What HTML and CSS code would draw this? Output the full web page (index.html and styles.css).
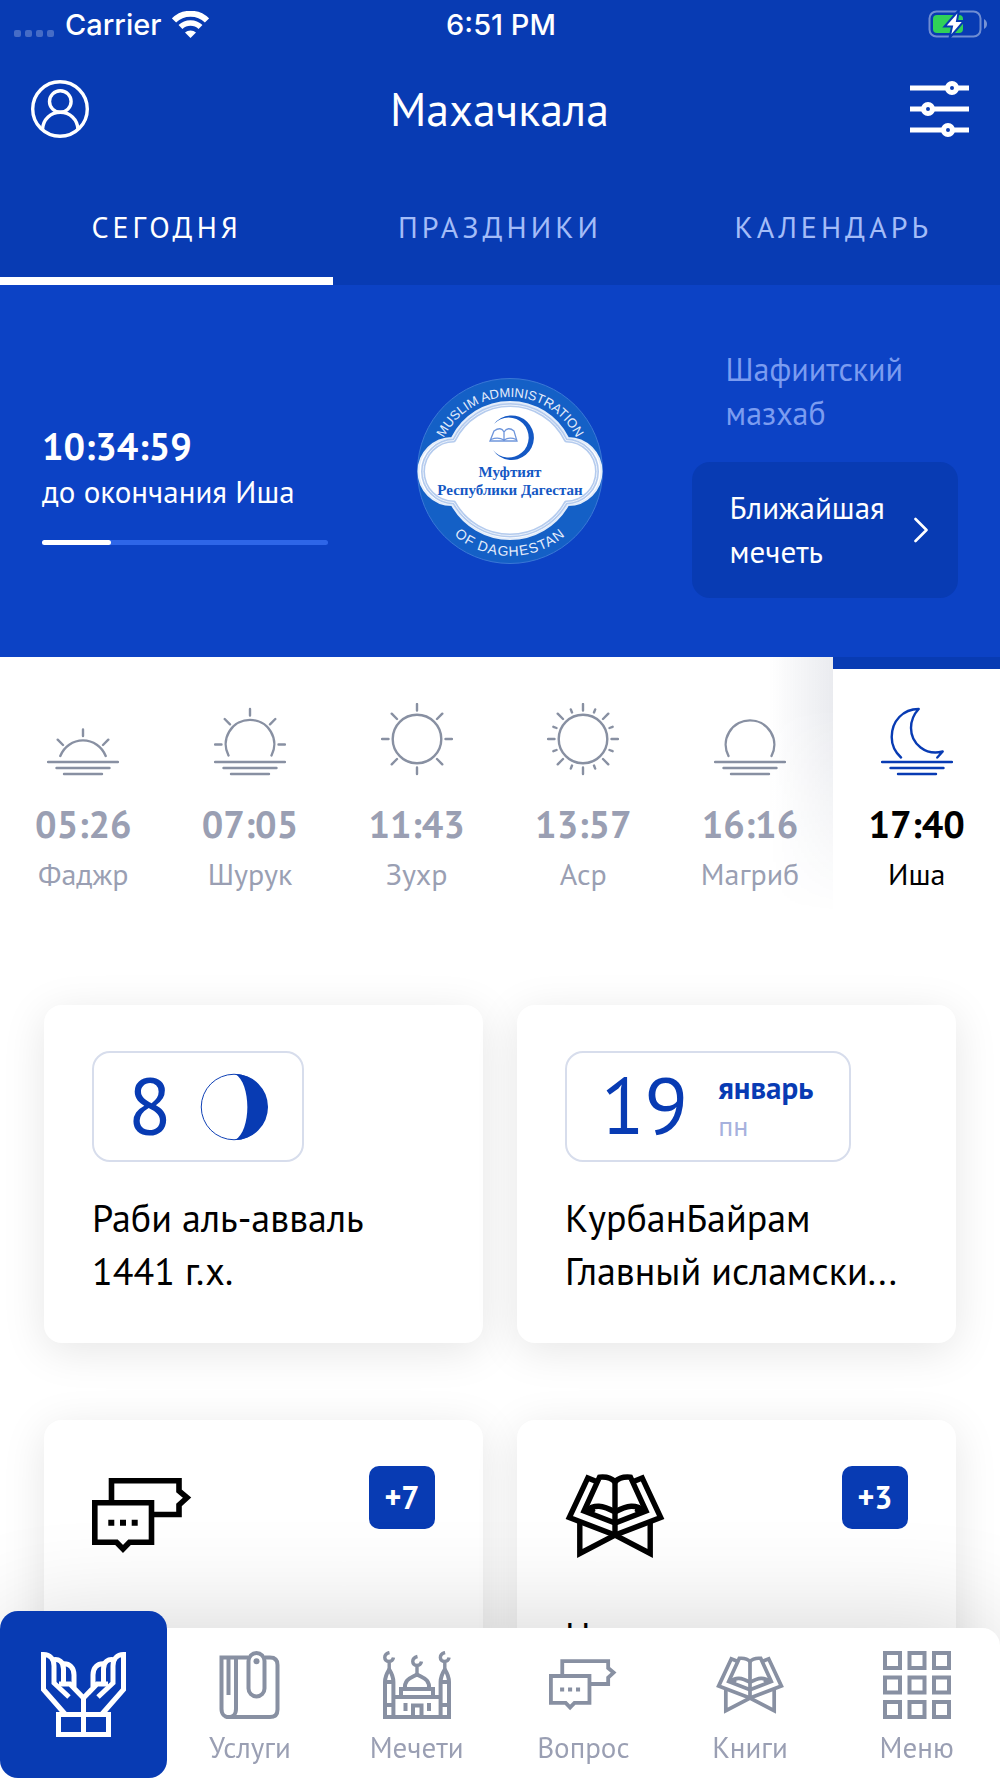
FILE: index.html
```html
<!DOCTYPE html>
<html lang="ru">
<head>
    <meta charset="UTF-8">
    <meta name="viewport" content="width=device-width, initial-scale=1.0">
    <title>Махачкала</title>
    <link rel="stylesheet" href="styles.css">
</head>
<body>
    <!-- Общие иконки -->
    <svg class="sprite" aria-hidden="true">
        <symbol id="icon-chat" viewBox="0 0 100 76">
            <g fill="none" stroke="currentColor" stroke-width="5.6">
                <path d="M19.5 24V2.8H87V13L95 19.7L87 27V36.5H61"/>
                <path d="M2.8 24.8H59.5V64.2H37.5L31 71L24.5 64.2H2.8Z"/>
            </g>
            <path d="M16.3 41.7h6v6h-6zM28 41.7h6v6h-6zM39.7 41.7h6v6h-6z" fill="currentColor"/>
        </symbol>
        <symbol id="icon-quran" viewBox="0 0 99 84">
            <g fill="none" stroke="currentColor" stroke-width="5.4">
                <path d="M31 7.5L22.3 3.9L3.8 43.6L49.5 61L95.2 43.6L76.7 3.9L68 7.5"/>
                <path d="M49.5 49L18.5 37L34 3.2C40 2.6 46 4 49.5 8C53 4 59 2.6 65 3.2L80.5 37Z"/>
                <path d="M20 37C29 30 37 31 49.5 38C62 31 70 30 79 37"/>
                <path d="M49.5 7V61M14.3 49V79.5L49.5 61L84.7 79.5V49"/>
            </g>
            <path d="M17 38L28 31L30 37L26 41ZM82 38L71 31L69 37L73 41Z" fill="currentColor"/>
        </symbol>
    </svg>

    <div class="app">
        <header class="header">
            <div class="status-bar">
                <div class="status-left">
                    <span class="signal"><i></i><i></i><i></i><i></i></span>
                    <span>Carrier</span>
                    <svg width="37" height="27" viewBox="0 0 37 27" fill="none" stroke="#fff">
                        <path d="M2 9.5C11 0.5 26 0.5 35 9.5" stroke-width="6"/>
                        <path d="M8.5 16C14 10.5 23 10.5 28.5 16" stroke-width="5.5"/>
                        <path d="M13 21.5C16 18.8 21 18.8 24 21.5L18.5 27Z" fill="#fff" stroke="none"/>
                    </svg>
                </div>
                <span>6:51 PM</span>
                <div class="status-right">
                    <svg width="60" height="28" viewBox="0 0 60 28">
                        <rect x="1.5" y="1.5" width="51" height="25" rx="7" fill="none" stroke="#fff" stroke-opacity=".42" stroke-width="2"/>
                        <path d="M56 9C60 11 60 17 56 19Z" fill="#fff" fill-opacity=".45"/>
                        <rect x="5" y="5" width="30" height="18" rx="4" fill="#30d158"/>
                        <path d="M31 0L16.5 16.5H24L21.5 28L36 11H29Z" fill="#fff" stroke="#083bb3" stroke-width="2"/>
                    </svg>
                </div>
            </div>

            <div class="title-bar">
                <button class="icon-btn" aria-label="Профиль">
                    <svg width="58" height="58" viewBox="0 0 58 58" fill="none" stroke="#fff" stroke-width="3.4">
                        <circle cx="29" cy="29" r="27.3"/>
                        <circle cx="29.3" cy="21.5" r="10.8"/>
                        <path d="M11.5 49.5C12 39 20 32.3 29.3 32.3S46.5 39 47 49.5"/>
                    </svg>
                </button>
                <h1>Махачкала</h1>
                <button class="icon-btn" aria-label="Настройки">
                    <svg width="60" height="58" viewBox="0 0 60 58" fill="#083bb3" stroke="#fff">
                        <path d="M0 8H59M0 29H59M0 50H59" stroke-width="5"/>
                        <circle cx="42" cy="8" r="4.5" stroke-width="5"/>
                        <circle cx="18" cy="29" r="4.5" stroke-width="5"/>
                        <circle cx="38" cy="50" r="4.5" stroke-width="5"/>
                    </svg>
                </button>
            </div>

            <nav class="tabs">
                <a href="#today" class="tab tab-active">СЕГОДНЯ</a>
                <a href="#holidays" class="tab">ПРАЗДНИКИ</a>
                <a href="#calendar" class="tab">КАЛЕНДАРЬ</a>
            </nav>
        </header>

        <section class="hero">
            <div class="timer">
                <div class="timer-value">10:34:59</div>
                <div class="timer-label">до окончания Иша</div>
                <div class="progress"><div class="progress-fill" style="width: 24%"></div></div>
            </div>

            <svg class="emblem" viewBox="0 0 188 188" role="img" aria-label="Муфтият Республики Дагестан">
                <defs>
                    <path id="arc-top" d="M20 93A74 74 0 0 1 168 93"/>
                    <path id="arc-bottom" d="M9 93A85 85 0 0 0 179 93"/>
                </defs>
                <circle cx="94" cy="93" r="92.5" fill="#1460c6" stroke="#3a78d6" stroke-width="1"/>
                <g stroke-linejoin="round">
                    <path d="M36 60A64.7 64.7 0 0 1 152 60A33.5 33.5 0 0 1 152 127A66.5 66.5 0 0 1 36 127A33.5 33.5 0 0 1 36 60Z" fill="#fff" stroke="#e4edfa" stroke-width="2"/>
                    <path d="M38 62.5A62 62 0 0 1 150 62.5A31 31 0 0 1 150 124.5A64 64 0 0 1 38 124.5A31 31 0 0 1 38 62.5Z" fill="#fff" stroke="#b4cbee" stroke-width="4"/>
                    <path d="M38 62.5A62 62 0 0 1 150 62.5A31 31 0 0 1 150 124.5A64 64 0 0 1 38 124.5A31 31 0 0 1 38 62.5Z" fill="none" stroke="#eaf1fb" stroke-width="1"/>
                </g>
                <path d="M78 46A22.3 22.3 0 1 1 77 72A20 20 0 1 0 78 46Z" fill="#1458c4"/>
                <path d="M74 63L78 53Q85 48 88 54Q92 48 98 53L101 63ZM88 54V63M75 61.5Q82 58.5 88 62Q94 58.5 100 61.5" fill="none" stroke="#6f96dc" stroke-width="1.3"/>
                <g class="emblem-name" text-anchor="middle">
                    <text x="94" y="99">Муфтият</text>
                    <text x="94" y="117">Республики Дагестан</text>
                </g>
                <g class="emblem-ring" text-anchor="middle">
                    <text><textPath href="#arc-top" startOffset="50%">MUSLIM ADMINISTRATION</textPath></text>
                    <text class="emblem-ring-wide"><textPath href="#arc-bottom" startOffset="50%">OF DAGHESTAN</textPath></text>
                </g>
            </svg>

            <div class="mosque">
                <p class="madhab">Шафиитский мазхаб</p>
                <button class="mosque-btn">
                    <span>Ближайшая мечеть</span>
                    <svg width="14" height="26" viewBox="0 0 14 26" fill="none" stroke="#fff" stroke-width="2.6" stroke-linecap="round" stroke-linejoin="round">
                        <path d="M1.5 2L12.5 13L1.5 24"/>
                    </svg>
                </button>
            </div>
        </section>

        <!-- Время намазов -->
        <section class="prayers">
            <div class="prayer">
                <svg class="prayer-icon" viewBox="0 0 72 74">
                    <path d="M13.3 53A24.3 24.3 0 0 1 58.7 53M36 26.5V33M10.7 36.7L16 42M61.3 36.7L56 42M1 59H71M9.5 65H62.5M17 71H55"/>
                </svg>
                <div class="prayer-time">05:26</div>
                <div class="prayer-name">Фаджр</div>
            </div>
            <div class="prayer">
                <svg class="prayer-icon" viewBox="0 0 72 74">
                    <path d="M14.5 52.5A24.3 24.3 0 1 1 57.5 52.5M36 6V12.5M1 41.5H7.5M64.5 41.5H71M10.7 16L16 21.3M61.3 16L56 21.3M1 59H71M9.5 65H62.5M17 71H55"/>
                </svg>
                <div class="prayer-time">07:05</div>
                <div class="prayer-name">Шурук</div>
            </div>
            <div class="prayer">
                <svg class="prayer-icon" viewBox="0 0 72 74">
                    <circle cx="36" cy="36" r="24.3"/>
                    <path d="M36 1V7.5M36 64.5V71M1 36H7.5M64.5 36H71M10.7 10.7L16 16M61.3 10.7L56 16M10.7 61.3L16 56M61.3 61.3L56 56"/>
                </svg>
                <div class="prayer-time">11:43</div>
                <div class="prayer-name">Зухр</div>
            </div>
            <div class="prayer">
                <svg class="prayer-icon" viewBox="0 0 72 74">
                    <circle cx="36" cy="36" r="24.3"/>
                    <path d="M36 1V7.5M36 64.5V71M1 36H7.5M64.5 36H71M10.7 10.7L16 16M61.3 10.7L56 16M10.7 61.3L16 56M61.3 61.3L56 56"/>
                    <path d="M25 9.5L23.8 6.4M47 9.5L48.2 6.4M25 62.5L23.8 65.6M47 62.5L48.2 65.6M9.5 25L6.4 23.8M9.5 47L6.4 48.2M62.5 25L65.6 23.8M62.5 47L65.6 48.2"/>
                </svg>
                <div class="prayer-time">13:57</div>
                <div class="prayer-name">Аср</div>
            </div>
            <div class="prayer">
                <svg class="prayer-icon" viewBox="0 0 72 74">
                    <path d="M14.5 53A24.3 24.3 0 1 1 57.5 53M1 59H71M9.5 65H62.5M17 71H55"/>
                </svg>
                <div class="prayer-time">16:16</div>
                <div class="prayer-name">Магриб</div>
            </div>
            <div class="prayer prayer-active">
                <svg class="prayer-icon" viewBox="0 0 72 74">
                    <path d="M20 54.5C14 49 10.7 42 10.7 34C10.7 18 22 6 37.7 6C33 11 30 18 30 25C30 41 45 53 61.7 48.5L56.3 54.5M1 59H71M9.5 65H62.5M17 71H55"/>
                </svg>
                <div class="prayer-time">17:40</div>
                <div class="prayer-name">Иша</div>
            </div>
        </section>

        <main class="cards">
            <article class="card">
                <div class="date-pill">
                    <span class="date-day">8</span>
                    <svg width="68" height="68" viewBox="0 0 70 70">
                        <circle cx="35" cy="35" r="33.7" fill="none" stroke="#083bb3" stroke-width="1"/>
                        <path d="M36 1A34 34 0 0 1 36 69C53 60 53 10 36 1Z" fill="#083bb3"/>
                    </svg>
                </div>
                <div class="card-text">Раби аль-авваль</div>
                <div class="card-text">1441 г.х.</div>
            </article>

            <article class="card">
                <div class="date-pill">
                    <span class="date-day">19</span>
                    <div class="date-info">
                        <div class="date-month">январь</div>
                        <div class="date-week">пн</div>
                    </div>
                </div>
                <div class="card-text">КурбанБайрам</div>
                <div class="card-text">Главный исламски...</div>
            </article>

            <article class="card card-link">
                <div class="card-top">
                    <svg width="100" height="84"><use href="#icon-chat"/></svg>
                    <span class="badge">+7</span>
                </div>
                <div class="card-text">Новые вопросы</div>
            </article>

            <article class="card card-link">
                <div class="card-top">
                    <svg width="100" height="84"><use href="#icon-quran"/></svg>
                    <span class="badge">+3</span>
                </div>
                <div class="card-text">Новые книги</div>
            </article>
        </main>
    </div>

    <nav class="bottom-bar">
        <a href="#home" class="bottom-item bottom-active" aria-label="Главная">
            <svg width="85" height="85" viewBox="0 0 85 85" fill="none" stroke="#fff" stroke-width="5">
                <path d="M17.5 62.5H67.5V82.5H17.5ZM42.5 82.5V45"/>
                <g id="hand">
                    <path d="M24 62L2.5 37.5V2.5C9 2.5 13 7 13 14V31L28 45"/>
                    <path d="M11 8C18 6 22.5 10 22.5 17V31"/>
                    <path d="M21 12C29 11 33 16 33 23V35"/>
                    <path d="M18 32H29L42.5 46"/>
                </g>
                <use href="#hand" transform="matrix(-1 0 0 1 85 0)"/>
            </svg>
        </a>
        <a href="#services" class="bottom-item">
            <svg width="61" height="68" viewBox="0 0 61 68" fill="none" stroke="currentColor" stroke-width="4">
                <path d="M29 6.5H2.5V58C2.5 69 17 69 17 58V6.5M9.5 7V44"/>
                <path d="M9 66H51Q58.5 66 58.5 58.5V14Q58.5 6.5 51 6.5H46"/>
                <rect x="29.5" y="2" width="16" height="43.5" rx="8"/>
                <circle cx="37.5" cy="10.3" r="3" fill="currentColor" stroke="none"/>
            </svg>
            <span>Услуги</span>
        </a>
        <a href="#mosques" class="bottom-item">
            <svg width="68" height="68" viewBox="0 0 68 68" fill="none" stroke="currentColor" stroke-width="4">
                <g id="minaret">
                    <path d="M2 66V31C2 25 4 22 6.2 18.5C8.4 22 10.4 25 10.4 31V66M2 31H10.4M2 54H10.4"/>
                    <path d="M6.2 20V11M6.5 1.5C0 3 0.5 10.5 6 10.5C9 10.5 10 9 10.5 6.5" stroke-width="3.4"/>
                </g>
                <use href="#minaret" x="55.6"/>
                <path d="M0 66H68M10 46H58M18 46V38H50V46M22 38C21 28 28 27 34 23.5C40 27 47 28 46 38M30 66V54.5H38.5V66M22.5 52V60M46 52V60"/>
                <path d="M34 24V15M34.5 5.5C28 7 28.5 14.5 34 14.5C37 14.5 38 13 38.5 10.5" stroke-width="3.4"/>
            </svg>
            <span>Мечети</span>
        </a>
        <a href="#question" class="bottom-item">
            <svg width="68" height="68" viewBox="0 -4 68 68"><use href="#icon-chat" width="68" height="60"/></svg>
            <span>Вопрос</span>
        </a>
        <a href="#books" class="bottom-item">
            <svg width="68" height="68"><use href="#icon-quran" width="68" height="68"/></svg>
            <span>Книги</span>
        </a>
        <a href="#menu" class="bottom-item">
            <svg width="68" height="68" viewBox="0 0 68 68" fill="none" stroke="currentColor" stroke-width="4">
                <path d="M2 2h15v15h-15zM26.5 2h15v15h-15zM51 2h15v15h-15zM2 26.5h15v15h-15zM26.5 26.5h15v15h-15zM51 26.5h15v15h-15zM2 51h15v15h-15zM26.5 51h15v15h-15zM51 51h15v15h-15z"/>
            </svg>
            <span>Меню</span>
        </a>
    </nav>
</body>
</html>
```
FILE: styles.css
```css
* {
    margin: 0;
    padding: 0;
    box-sizing: border-box;
}

body {
    font-family: 'PT Sans', 'Noto Sans', sans-serif;
    background: #fff;
    color: #000;
}

a {
    color: inherit;
    text-decoration: none;
}

button {
    font: inherit;
    color: inherit;
    background: none;
    border: none;
    cursor: pointer;
}

svg {
    display: block;
    flex-shrink: 0;
}

.sprite {
    position: absolute;
    width: 0;
    height: 0;
}

.app {
    height: 100vh;
    overflow-y: auto;
    scrollbar-width: none;
}

/* Шапка */
.header {
    background: #083bb3;
    color: #fff;
}

.status-bar {
    display: grid;
    grid-template-columns: 1fr auto 1fr;
    align-items: center;
    height: 48px;
    padding: 0 12px 0 14px;
    font-family: 'Inter', sans-serif;
    font-size: 29px;
    font-weight: 500;
}

.status-left {
    display: flex;
    align-items: center;
    gap: 11px;
}

.status-right {
    display: flex;
    justify-content: flex-end;
}

.signal {
    display: flex;
    gap: 4px;
    padding-top: 18px;
}

.signal i {
    width: 7px;
    height: 7px;
    border-radius: 2px;
    background: rgba(255, 255, 255, 0.25);
}

.title-bar {
    display: flex;
    justify-content: space-between;
    align-items: center;
    height: 122px;
    padding: 0 30px 0 31px;
}

.title-bar h1 {
    font-size: 46px;
    font-weight: 400;
    line-height: 60px;
}

.tabs {
    display: grid;
    grid-template-columns: repeat(3, 1fr);
}

.tab {
    height: 115px;
    padding-top: 39px;
    border-bottom: 8px solid transparent;
    color: #a3bcf8;
    font-size: 30px;
    line-height: 36px;
    letter-spacing: 4px;
    text-align: center;
}

.tab-active {
    color: #fff;
    border-color: #fff;
}

/* Таймер, эмблема и ближайшая мечеть */
.hero {
    display: grid;
    grid-template-columns: 15fr auto 14fr;
    align-items: center;
    gap: 88px;
    height: 372px;
    padding: 2px 42px 0;
    background: #0c42c5;
    color: #fff;
}

.timer {
    padding-top: 22px;
}

.timer-value {
    font-size: 38px;
    font-weight: 700;
    line-height: 48px;
}

.timer-label {
    font-size: 31px;
    line-height: 44px;
    white-space: nowrap;
}

.progress {
    height: 5px;
    margin-top: 26px;
    border-radius: 3px;
    background: #2e66e8;
}

.progress-fill {
    height: 100%;
    border-radius: 3px;
    background: #fff;
}

.emblem {
    width: 188px;
    height: 188px;
}

.emblem-name {
    font-family: 'Liberation Serif', serif;
    font-size: 15px;
    font-weight: 700;
    fill: #1458c4;
}

.emblem-ring {
    font-family: 'Liberation Sans', sans-serif;
    font-size: 13px;
    fill: #e4edfc;
}

.emblem-ring-wide {
    font-size: 14px;
    letter-spacing: 1px;
}

.madhab {
    padding: 0 34px;
    margin-bottom: 27px;
    color: #7b9cf0;
    font-size: 32px;
    line-height: 44px;
}

.mosque-btn {
    display: flex;
    justify-content: space-between;
    align-items: center;
    width: 100%;
    padding: 24px 30px 24px 38px;
    border-radius: 18px;
    background: #083bb3;
    font-size: 31px;
    line-height: 44px;
    text-align: left;
}

/* Время намазов */
.prayers {
    display: grid;
    grid-template-columns: repeat(6, 1fr);
}

.prayer {
    height: 256px;
    padding-top: 46px;
    color: #9a9fb3;
    text-align: center;
}

.prayer-icon {
    width: 72px;
    height: 74px;
    margin: 0 auto;
    fill: none;
    stroke: #8890a2;
    stroke-width: 2.4;
    stroke-linecap: round;
    stroke-linejoin: round;
}

.prayer-time {
    margin-top: 22px;
    font-size: 38px;
    font-weight: 700;
    line-height: 50px;
}

.prayer-name {
    font-size: 30px;
    line-height: 50px;
}

.prayer-active {
    position: relative;
    padding-top: 34px;
    border-top: 12px solid #083bb3;
    color: #000;
}

.prayer-active .prayer-icon {
    stroke: #083bb3;
}

.prayer-active::before {
    content: "";
    position: absolute;
    top: -12px;
    right: 100%;
    width: 64px;
    height: 256px;
    background: linear-gradient(to left, rgba(20, 35, 80, 0.09), transparent);
    mask-image: linear-gradient(#000 20%, transparent);
}

/* Карточки */
.cards {
    display: grid;
    grid-template-columns: repeat(2, 1fr);
    gap: 77px 34px;
    padding: 92px 44px 200px;
}

.card {
    min-width: 0;
    padding: 46px 48px;
    border-radius: 18px;
    background: #fff;
    box-shadow: 0 8px 44px rgba(0, 0, 0, 0.1);
}

.date-pill {
    display: inline-flex;
    align-items: center;
    gap: 28px;
    height: 111px;
    margin-bottom: 29px;
    padding: 0 34px;
    border: 2px solid #d7ddec;
    border-radius: 18px;
    color: #083bb3;
    vertical-align: top;
}

.date-day {
    padding-bottom: 4px;
    font-size: 80px;
    line-height: 100px;
}

.date-info {
    padding: 0 2px;
}

.date-month {
    font-size: 31px;
    font-weight: 700;
    line-height: 38px;
}

.date-week {
    color: #a6b1dd;
    font-size: 28px;
    line-height: 38px;
}

.card-text {
    overflow: hidden;
    font-size: 38px;
    line-height: 53px;
    text-overflow: ellipsis;
    white-space: nowrap;
}

.card-link {
    height: 338px;
}

.card-top {
    display: flex;
    justify-content: space-between;
    height: 132px;
    margin-bottom: 11px;
}

.card-top svg {
    margin-top: 8px;
}

.badge {
    width: 66px;
    height: 63px;
    border-radius: 10px;
    background: #083bb3;
    color: #fff;
    font-size: 32px;
    font-weight: 700;
    line-height: 63px;
    text-align: center;
}

/* Нижнее меню */
.bottom-bar {
    position: fixed;
    right: 0;
    bottom: 0;
    left: 0;
    display: grid;
    grid-template-columns: repeat(6, 1fr);
    height: 150px;
    border-radius: 0 18px 0 0;
    background: #fff;
    box-shadow: 0 0 110px rgba(0, 0, 0, 0.18);
}

.bottom-item {
    display: flex;
    flex-direction: column;
    align-items: center;
    padding-top: 23px;
    color: #9a9fb3;
    font-size: 29px;
    line-height: 36px;
}

.bottom-item svg {
    color: #8890a2;
    margin-bottom: 10px;
}

.bottom-active {
    justify-content: center;
    margin-top: -17px;
    padding-top: 10px;
    border-radius: 18px;
    background: #083bb3;
}
```
